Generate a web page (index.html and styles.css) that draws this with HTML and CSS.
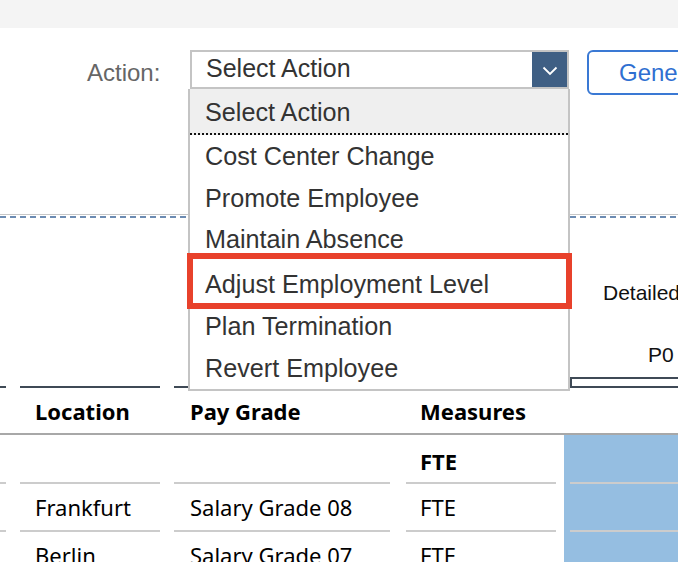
FILE: index.html
```html
<!DOCTYPE html>
<html>
<head>
<meta charset="utf-8">
<link rel="stylesheet" href="styles.css">
</head>
<body>
<div class="page">
  <div class="topbar"></div>
  <div class="toolbar">
    <span class="label">Action:</span>
    <div class="select">
      <span class="select-text">Select Action</span>
      <span class="select-btn">
        <svg width="16" height="10" viewBox="0 0 16 10"><path d="M1.5 1.5 L8 8 L14.5 1.5" fill="none" stroke="#fff" stroke-width="1.8"/></svg>
      </span>
    </div>
    <div class="gen-btn">Generate</div>
  </div>
  <div class="rule-gray"></div>
  <div class="rule-dash"></div>
  <div class="pivot-area">
    <div class="pv-detailed">Detailed</div>
    <div class="pv-p0">P0</div>
  </div>
  <div class="grid">
    <div class="row caps">
      <div class="c c0"><div class="cap"></div></div>
      <div class="c c1"><div class="cap"></div></div>
      <div class="c c2"><div class="cap"></div></div>
      <div class="c c3"><div class="cap"></div></div>
      <div class="c c4"><div class="capbox"></div></div>
    </div>
    <div class="row head">
      <div class="c c0"></div>
      <div class="c c1">Location</div>
      <div class="c c2">Pay Grade</div>
      <div class="c c3">Measures</div>
      <div class="c c4"></div>
    </div>
    <div class="head-rule"></div>
    <div class="row body r1">
      <div class="c c0"></div>
      <div class="c c1"></div>
      <div class="c c2"></div>
      <div class="c c3 bold">FTE</div>
      <div class="c c4"><div class="inner"></div></div>
    </div>
    <div class="row body r2">
      <div class="c c0 line"></div>
      <div class="c c1 line">Frankfurt</div>
      <div class="c c2 line">Salary Grade 08</div>
      <div class="c c3 line">FTE</div>
      <div class="c c4"><div class="inner line"></div></div>
    </div>
    <div class="row body r3">
      <div class="c c0 line"></div>
      <div class="c c1 line">Berlin</div>
      <div class="c c2 line">Salary Grade 07</div>
      <div class="c c3 line">FTE</div>
      <div class="c c4"><div class="inner line"></div></div>
    </div>
  </div>

  <div class="menu">
    <div class="item first">Select Action</div>
    <div class="item">Cost Center Change</div>
    <div class="item">Promote Employee</div>
    <div class="item tall">Maintain Absence</div>
    <div class="item">Adjust Employment Level</div>
    <div class="item">Plan Termination</div>
    <div class="item">Revert Employee</div>
  </div>
  <div class="highlight"></div>
</div>
</body>
</html>
```

FILE: styles.css
```css
html, body {
  margin: 0;
  padding: 0;
  background: #fff;
}
.page {
  position: relative;
  width: 678px;
  height: 562px;
  overflow: hidden;
  font-family: "Liberation Sans", Arial, sans-serif;
  color: #333;
}
.topbar {
  height: 28px;
  background: #f4f4f4;
}
.toolbar {
  display: flex;
  align-items: flex-start;
  margin-top: 22px;
  height: 45px;
  padding-left: 87px;
}
.toolbar > * {
  flex-shrink: 0;
}
.label {
  font-size: 24px;
  color: #666;
  line-height: 45px;
  width: 103px;
}
.select {
  box-sizing: border-box;
  width: 379px;
  height: 39px;
  border: 2px solid #c4c4c4;
  display: flex;
  align-items: center;
  background: #fff;
}
.select-text {
  flex: 1;
  font-size: 25px;
  color: #333;
  padding-left: 14px;
  margin-top: -2px;
}
.select-btn {
  width: 35px;
  height: 35px;
  background: #3f5f84;
  display: flex;
  align-items: center;
  justify-content: center;
}
.select-btn svg {
  margin-top: 3px;
}
.gen-btn {
  box-sizing: border-box;
  margin-left: 18px;
  width: 130px;
  height: 45px;
  border: 2px solid #3a79d4;
  border-radius: 6px;
  color: #2f6fd1;
  font-size: 24px;
  line-height: 41px;
  padding-left: 30px;
  white-space: nowrap;
}
.rule-gray {
  margin-top: 119px;
  height: 1px;
  background: #c8c8c8;
}
.rule-dash {
  margin-top: 1px;
  height: 2px;
  background: repeating-linear-gradient(90deg, #6c8bb2 0 6px, transparent 6px 10px);
}
.pivot-area {
  box-sizing: border-box;
  height: 159px;
  padding-top: 63px;
  font-size: 21px;
  color: #111;
}
.pv-detailed {
  padding-left: 603px;
  line-height: 24px;
  white-space: nowrap;
}
.pv-p0 {
  padding-left: 648px;
  margin-top: 38px;
  line-height: 24px;
}
.grid {
  font-family: "Noto Sans", "Open Sans", sans-serif;
  font-size: 22px;
  color: #000;
}
.row {
  display: flex;
}
.c {
  box-sizing: border-box;
  flex-shrink: 0;
  white-space: nowrap;
}
.c0 { width: 6px; margin-right: 14px; }
.c1 { width: 140px; margin-right: 14px; padding-left: 15px; }
.c2 { width: 216px; margin-right: 16px; padding-left: 16px; }
.c3 { width: 150px; margin-right: 8px; padding-left: 14px; }
.c4 { width: 114px; }
.caps {
  height: 11px;
  align-items: flex-end;
}
.caps .c {
  padding-left: 0;
}
.cap {
  height: 2px;
  background: #3f4a56;
}
.capbox {
  box-sizing: border-box;
  margin-left: 6px;
  height: 11px;
  border: 2px solid #3f4a56;
  border-right: none;
}
.head {
  height: 45px;
  align-items: center;
  font-weight: 700;
}
.head-rule {
  height: 2px;
  background: #a8a8a8;
}
.body .c {
  display: flex;
  align-items: center;
}
.r1 { height: 47px; }
.r1 .c { padding-top: 4px; }
.r2 { height: 48px; }
.r3 { height: 48px; }
.line {
  border-top: 2px solid #cccccc;
}
.bold { font-weight: 700; }
.body .c4 {
  background: #95bee1;
  padding-left: 6px;
  align-items: stretch;
}
.body .c4 .inner {
  flex: 1;
}
.menu {
  position: absolute;
  left: 188px;
  top: 89px;
  width: 382px;
  box-sizing: border-box;
  border: 2px solid #c4c4c4;
  border-top: none;
  background: #fff;
  font-size: 25.2px;
  color: #333;
}
.item {
  height: 42px;
  line-height: 42px;
  padding-left: 15px;
  white-space: nowrap;
}
.item.first {
  box-sizing: border-box;
  height: 46px;
  line-height: 46px;
  background: #efefef;
  border-bottom: 2px dotted #111;
}
.item.tall {
  height: 44px;
  line-height: 40px;
}
.highlight {
  position: absolute;
  left: 187px;
  top: 253px;
  width: 385px;
  height: 56px;
  box-sizing: border-box;
  border: 6px solid #e8412b;
}
```
